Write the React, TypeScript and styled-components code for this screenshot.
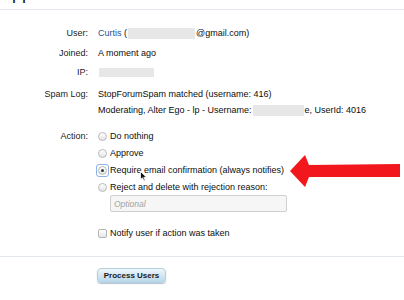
import React from "react";
import styled, { createGlobalStyle } from "styled-components";

const GlobalStyle = createGlobalStyle`
  html, body { margin: 0; padding: 0; background: #fff; }
  body {
    font-family: "Liberation Sans", Arial, sans-serif;
    font-size: 9px;
    color: #111;
  }
`;

const Page = styled.div`
  position: relative;
  width: 404px;
  height: 300px;
  overflow: hidden;
  background: #fff;
`;

const Title = styled.h1`
  margin: -17px 0 0 0;
  font-size: 18px;
  line-height: 20px;
  font-weight: normal;
  color: #111;
`;

const Divider = styled.div<{ $mt: number }>`
  height: 1px;
  background: #e2e8ee;
  margin-top: ${(p) => p.$mt}px;
`;

const Form = styled.div`
  display: flex;
  flex-direction: column;
`;

const Row = styled.div<{ $mt: number }>`
  display: grid;
  grid-template-columns: 88px 1fr;
  column-gap: 10px;
  margin-top: ${(p) => p.$mt}px;
  line-height: 12px;
`;

const Label = styled.div`
  text-align: right;
  color: #222;
`;

const Value = styled.div<{ $gap?: number }>`
  display: flex;
  flex-direction: column;
  gap: ${(p) => p.$gap ?? 0}px;
  color: #0d0d0d;
`;

const Line = styled.div`
  display: flex;
  align-items: center;
  height: 12px;
  white-space: nowrap;
`;

const UserLink = styled.span`
  color: #2c4f8f;
`;

const Redacted = styled.span<{ $w: number; $h?: number }>`
  display: inline-block;
  width: ${(p) => p.$w}px;
  height: ${(p) => p.$h ?? 11}px;
  background: #e7e7e7;
  margin: 0 1px;
`;

const Option = styled.label`
  display: flex;
  align-items: center;
  gap: 3px;
  height: 12px;
  white-space: nowrap;
`;

const Radio = styled.span<{ $checked?: boolean }>`
  position: relative;
  flex: none;
  width: 7px;
  height: 7px;
  border-radius: 50%;
  border: 1px solid #b9b9b9;
  background: linear-gradient(#ffffff, #e4e4e4);
  display: flex;
  align-items: center;
  justify-content: center;
  &::before {
    content: "";
    display: ${(p) => (p.$checked ? "block" : "none")};
    width: 3px;
    height: 3px;
    border-radius: 50%;
    background: #3a3a3a;
  }
  &::after {
    content: "";
    display: ${(p) => (p.$checked ? "block" : "none")};
    position: absolute;
    left: -3px;
    top: -3px;
    right: -3px;
    bottom: -3px;
    border: 1.5px solid #8db3e6;
    border-radius: 3px;
  }
`;

const Check = styled.span`
  flex: none;
  width: 7px;
  height: 7px;
  border-radius: 2px;
  border: 1px solid #b5b5b5;
  background: linear-gradient(#ffffff, #e6e6e6);
`;

const ReasonInput = styled.div`
  margin: -3px 0 0 12px;
  width: 172px;
  height: 15px;
  border: 1px solid #cfcfcf;
  border-radius: 2px;
  background: #f6f6f6;
  display: flex;
  align-items: center;
  padding-left: 3px;
  font-style: italic;
  color: #a3a3a3;
  font-size: 8.5px;
`;

const ButtonRow = styled.div`
  margin-top: 11px;
  padding-left: 97px;
`;

const Button = styled.button`
  width: 69px;
  height: 15px;
  border: 1px solid #b6cfdf;
  border-radius: 4px;
  background: linear-gradient(#eef6fb, #b9d8ea);
  box-shadow: 0 1px 1px rgba(90, 120, 150, 0.45);
  font-family: "Liberation Sans", Arial, sans-serif;
  font-size: 8px;
  font-weight: bold;
  color: #1a1a1a;
  padding: 0;
`;

const ArrowOverlay = styled.svg`
  position: absolute;
  left: 288px;
  top: 152px;
`;

const CursorOverlay = styled.svg`
  position: absolute;
  left: 140px;
  top: 171px;
`;

export default function App() {
  return (
    <Page>
      <GlobalStyle />
      <Title>Approval</Title>
      <Divider $mt={6} />
      <Form>
        <Row $mt={17}>
          <Label>User:</Label>
          <Value>
            <Line>
              <UserLink>Curtis</UserLink>&nbsp;(
              <Redacted $w={67} />
              @gmail.com)
            </Line>
          </Value>
        </Row>
        <Row $mt={8}>
          <Label>Joined:</Label>
          <Value>
            <Line>A moment ago</Line>
          </Value>
        </Row>
        <Row $mt={7}>
          <Label>IP:</Label>
          <Value>
            <Line>
              <Redacted $w={55} $h={9} />
            </Line>
          </Value>
        </Row>
        <Row $mt={10}>
          <Label>Spam Log:</Label>
          <Value $gap={4}>
            <Line>StopForumSpam matched (username: 416)</Line>
            <Line>
              Moderating, Alter Ego - lp - Username:
              <Redacted $w={51} />
              e, UserId: 4016
            </Line>
          </Value>
        </Row>
        <Row $mt={14}>
          <Label>Action:</Label>
          <Value $gap={5}>
            <Option>
              <Radio />
              Do nothing
            </Option>
            <Option>
              <Radio />
              Approve
            </Option>
            <Option>
              <Radio $checked />
              Require email confirmation (always notifies)
            </Option>
            <Option>
              <Radio />
              Reject and delete with rejection reason:
            </Option>
            <ReasonInput>Optional</ReasonInput>
          </Value>
        </Row>
        <Row $mt={15}>
          <Label />
          <Value>
            <Option>
              <Check />
              Notify user if action was taken
            </Option>
          </Value>
        </Row>
      </Form>
      <Divider $mt={17} />
      <ButtonRow>
        <Button>Process Users</Button>
      </ButtonRow>
      <ArrowOverlay width="116" height="38" viewBox="0 0 116 38">
        <polygon
          points="2,19 17,3 21,13 112,12 112,25 21,25 17,35"
          fill="#f2161d"
        />
      </ArrowOverlay>
      <CursorOverlay width="8" height="11" viewBox="0 0 8 11">
        <path d="M0.5 0.5 L0.5 8.5 L2.5 6.8 L4 10 L5.2 9.4 L3.8 6.3 L6.5 6.3 Z" fill="#111" stroke="#fff" strokeWidth="0.8" />
      </CursorOverlay>
    </Page>
  );
}
